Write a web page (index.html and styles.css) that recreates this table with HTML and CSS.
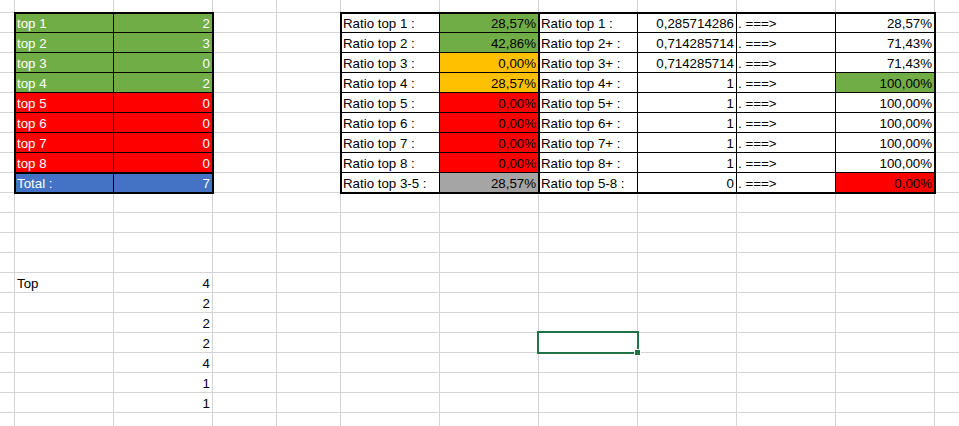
FILE: index.html
```html
<!DOCTYPE html>
<html lang="fr">
<head>
<meta charset="utf-8">
<title>Feuille</title>
<link rel="stylesheet" href="styles.css">
</head>
<body>
<div class="sheet">
  <div class="col"></div><div class="col"></div><div class="col"></div><div class="col"></div>
  <div class="col"></div><div class="col"></div><div class="col"></div><div class="col"></div>
  <div class="col"></div><div class="col"></div><div class="col"></div>

  <div class="t1">
    <div class="c green">top 1</div><div class="c green r">2</div>
    <div class="c green">top 2</div><div class="c green r">3</div>
    <div class="c green">top 3</div><div class="c green r">0</div>
    <div class="c green">top 4</div><div class="c green r">2</div>
    <div class="c red">top 5</div><div class="c red r">0</div>
    <div class="c red">top 6</div><div class="c red r">0</div>
    <div class="c red">top 7</div><div class="c red r">0</div>
    <div class="c red sep">top 8</div><div class="c red r sep">0</div>
    <div class="c blue">Total :</div><div class="c blue r">7</div>
  </div>

  <div class="t2">
    <div class="c">Ratio top 1 :</div><div class="c r bg-green">28,57%</div><div class="c">Ratio top 1 :</div><div class="c r">0,285714286</div><div class="c">. ===&gt;</div><div class="c r">28,57%</div>
    <div class="c">Ratio top 2 :</div><div class="c r bg-green">42,86%</div><div class="c">Ratio top 2+ :</div><div class="c r">0,714285714</div><div class="c">. ===&gt;</div><div class="c r">71,43%</div>
    <div class="c">Ratio top 3 :</div><div class="c r bg-gold">0,00%</div><div class="c">Ratio top 3+ :</div><div class="c r">0,714285714</div><div class="c">. ===&gt;</div><div class="c r">71,43%</div>
    <div class="c">Ratio top 4 :</div><div class="c r bg-gold">28,57%</div><div class="c">Ratio top 4+ :</div><div class="c r">1</div><div class="c">. ===&gt;</div><div class="c r bg-green">100,00%</div>
    <div class="c">Ratio top 5 :</div><div class="c r bg-red">0,00%</div><div class="c">Ratio top 5+ :</div><div class="c r">1</div><div class="c">. ===&gt;</div><div class="c r">100,00%</div>
    <div class="c">Ratio top 6 :</div><div class="c r bg-red">0,00%</div><div class="c">Ratio top 6+ :</div><div class="c r">1</div><div class="c">. ===&gt;</div><div class="c r">100,00%</div>
    <div class="c">Ratio top 7 :</div><div class="c r bg-red">0,00%</div><div class="c">Ratio top 7+ :</div><div class="c r">1</div><div class="c">. ===&gt;</div><div class="c r">100,00%</div>
    <div class="c">Ratio top 8 :</div><div class="c r bg-red">0,00%</div><div class="c">Ratio top 8+ :</div><div class="c r">1</div><div class="c">. ===&gt;</div><div class="c r">100,00%</div>
    <div class="c">Ratio top 3-5 :</div><div class="c r bg-gray">28,57%</div><div class="c">Ratio top 5-8 :</div><div class="c r">0</div><div class="c">. ===&gt;</div><div class="c r bg-red">0,00%</div>
  </div>

  <div class="cell label row15">Top</div>
  <div class="cell num row15">4</div>
  <div class="cell num row16">2</div>
  <div class="cell num row17">2</div>
  <div class="cell num row18">2</div>
  <div class="cell num row19">4</div>
  <div class="cell num row20">1</div>
  <div class="cell num row21">1</div>

  <div class="sel"><span class="handle"></span></div>
</div>
</body>
</html>
```
FILE: styles.css
```css
* { box-sizing: border-box; }
html, body { margin: 0; padding: 0; background: #fff; }
body {
  font-family: "Liberation Sans", Arial, sans-serif;
  font-size: 13.3px;
  color: #000;
}

.sheet {
  display: grid;
  width: 959px;
  height: 426px;
  overflow: hidden;
  grid-template-columns: 15px 99px 99px 64px 64px 99px 99px 99px 99px 99px 99px 1fr;
  grid-template-rows: 13px repeat(20, 20px) 1fr;
  background-image: linear-gradient(to bottom, transparent 19px, #d4d4d4 19px);
  background-size: 100% 20px;
  background-position: 0 13px;
}

.col { grid-row: 1 / -1; border-right: 1px solid #d4d4d4; }
.col:nth-child(1) { grid-column: 1; }
.col:nth-child(2) { grid-column: 2; }
.col:nth-child(3) { grid-column: 3; }
.col:nth-child(4) { grid-column: 4; }
.col:nth-child(5) { grid-column: 5; }
.col:nth-child(6) { grid-column: 6; }
.col:nth-child(7) { grid-column: 7; }
.col:nth-child(8) { grid-column: 8; }
.col:nth-child(9) { grid-column: 9; }
.col:nth-child(10) { grid-column: 10; }
.col:nth-child(11) { grid-column: 11; }

/* table cells */
.c {
  display: flex;
  align-items: flex-end;
  padding: 0 2px 1px 1px;
  line-height: 15px;
  white-space: nowrap;
  overflow: hidden;
  border-bottom: 1px solid #000;
  background: #fff;
}
.r { justify-content: flex-end; }

.t1 {
  grid-row: 2 / span 9;
  grid-column: 2 / span 2;
  margin: -1px;
  border: 2px solid #000;
  display: grid;
  grid-template-columns: 98px 98px;
  grid-template-rows: 19px repeat(6, 20px) 21px 18px;
  z-index: 1;
}
.t1 > .c:nth-child(odd) { border-right: 1px solid #000; }
.t1 > .c.sep { border-bottom-width: 2px; }
.t1 > .c:nth-last-child(-n+2) { border-bottom: 0; }
.t1 > .c { color: #fff; }

.green { background: #70ad47; }
.red { background: #ff0000; }
.blue { background: #4472c4; }

.t2 {
  grid-row: 2 / span 9;
  grid-column: 6 / span 6;
  margin: -1px;
  border: 2px solid #000;
  display: grid;
  grid-template-columns: 98px 100px 98px 99px 99px 98px;
  grid-template-rows: 19px repeat(7, 20px) 19px;
  z-index: 1;
}
.t2 > .c { border-right: 1px solid #000; }
.t2 > .c:nth-child(6n+2) { border-right-width: 2px; }
.t2 > .c:nth-child(6n) { border-right: 0; }
.t2 > .c:nth-last-child(-n+6) { border-bottom: 0; }

.bg-green { background: #70ad47; }
.bg-gold { background: #ffc000; }
.bg-red { background: #ff0000; }
.bg-gray { background: #a5a5a5; }

/* plain sheet cells */
.cell {
  display: flex;
  align-items: flex-end;
  line-height: 15px;
  padding: 0 3px 2px 2px;
  white-space: nowrap;
}
.label { grid-column: 2; }
.num { grid-column: 3; justify-content: flex-end; }
.row15 { grid-row: 15; }
.row16 { grid-row: 16; }
.row17 { grid-row: 17; }
.row18 { grid-row: 18; }
.row19 { grid-row: 19; }
.row20 { grid-row: 20; }
.row21 { grid-row: 21; }

/* active cell */
.sel {
  grid-row: 18;
  grid-column: 8;
  margin: -2px -1px -1px -2px;
  border: 2px solid #217346;
  position: relative;
  z-index: 2;
}
.handle {
  position: absolute;
  right: -4px;
  bottom: -4px;
  width: 7px;
  height: 7px;
  background: #217346;
  border: 1px solid #fff;
}
```
